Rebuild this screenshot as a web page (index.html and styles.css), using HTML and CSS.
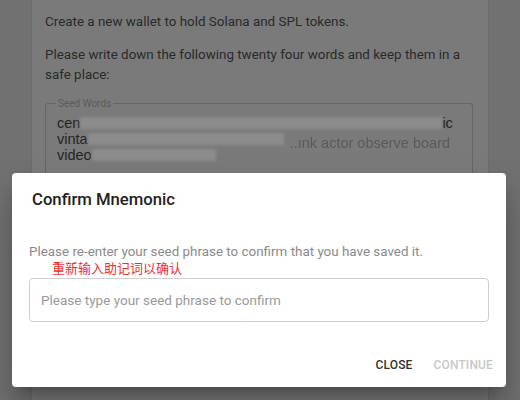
FILE: index.html
```html
<!DOCTYPE html>
<html>
<head>
<meta charset="utf-8">
<link rel="stylesheet" href="styles.css">
</head>
<body>
<div class="page">
  <div class="card">
    <p class="intro">Create a new wallet to hold Solana and SPL tokens.</p>
    <p class="intro">Please write down the following twenty four words and keep them in a safe place:</p>
    <fieldset class="seed">
      <legend>Seed Words</legend>
      <div class="words">
        <div class="wline">cen<span class="blur b1"></span>ic</div>
        <div class="wline">vinta<span class="blur b2"></span><span class="faded">..ınk actor observe board</span></div>
        <div class="wline">video<span class="blur b3"></span></div>
      </div>
    </fieldset>
  </div>
  <div class="dialog">
    <h2 class="title">Confirm Mnemonic</h2>
    <div class="content">
      <p class="hint">Please re-enter your seed phrase to confirm that you have saved it.</p>
      <p class="note">重新输入助记词以确认</p>
      <div class="field">Please type your seed phrase to confirm</div>
    </div>
    <div class="actions">
      <span class="btn close">CLOSE</span>
      <span class="btn disabled">CONTINUE</span>
    </div>
  </div>
</div>
</body>
</html>
```
FILE: styles.css
```css
html, body { margin: 0; padding: 0; }
body { font-family: Roboto, "Liberation Sans", sans-serif; }
.page {
  position: relative;
  width: 520px;
  height: 400px;
  overflow: hidden;
  background: #717171;
}
.card {
  margin-left: 32px;
  width: 456px;
  height: 400px;
  box-sizing: border-box;
  background: #7a7a7a;
  padding: 12px 15px 0 13px;
  box-shadow: 0 0 1px rgba(0,0,0,0.2);
}
.intro {
  margin: 0 0 13px 0;
  font-size: 13.4px;
  line-height: 20px;
  color: #2a2a2a;
}
.seed {
  margin: 0;
  padding: 6px 11px 20px 11px;
  border: 1px solid #666;
  border-radius: 3px;
}
.seed legend {
  font-size: 10px;
  color: #5a5a5a;
  padding: 0 2px;
  margin-left: -1px;
}
.words {
  font-family: "Liberation Sans", Arial, sans-serif;
  font-size: 14.5px;
  line-height: 16px;
  color: #252525;
}
.wline { white-space: nowrap; display: flex; align-items: center; height: 16px; }
.blur {
  display: inline-block;
  height: 12px;
  background: #8c8c8c;
  filter: blur(1.5px);
}
.b1 { width: 362px; }
.b2 { width: 196px; }
.b3 { width: 124px; }
.faded { color: #404040; opacity: 0.55; margin-left: 6px; position: relative; top: 4px; }
.dialog {
  position: absolute;
  left: 12px;
  top: 173px;
  width: 494px;
  height: 214px;
  background: #fff;
  border-radius: 4px;
  box-shadow: 0 11px 15px -7px rgba(0,0,0,0.3), 0 24px 38px 3px rgba(0,0,0,0.2);
  display: flex;
  flex-direction: column;
}
.title {
  margin: 0;
  padding: 17px 20px 0 20px;
  font-size: 16.7px;
  font-weight: 500;
  line-height: 20px;
  color: #222;
}
.content {
  padding: 35px 17px 0 17px;
}
.hint {
  margin: 0;
  font-size: 13.4px;
  line-height: 14px;
  color: #8a8a8a;
}
.note {
  margin: 0 0 0 23px;
  font-family: "Noto Sans CJK SC", sans-serif;
  font-size: 13px;
  line-height: 17px;
  color: #e8312f;
}
.field {
  margin-top: 2px;
  height: 44px;
  box-sizing: border-box;
  border: 1px solid #cfcfcf;
  border-radius: 4px;
  padding: 0 11px;
  display: flex;
  align-items: center;
  font-size: 13.5px;
  color: #9a9a9a;
}
.actions {
  margin-top: auto;
  display: flex;
  justify-content: flex-end;
  gap: 21px;
  padding: 0 13px 15px 0;
}
.btn {
  font-size: 12px;
  font-weight: 500;
  letter-spacing: 0.15px;
  line-height: 14px;
}
.close { color: #333; }
.disabled { color: #c8c8c8; }
```
